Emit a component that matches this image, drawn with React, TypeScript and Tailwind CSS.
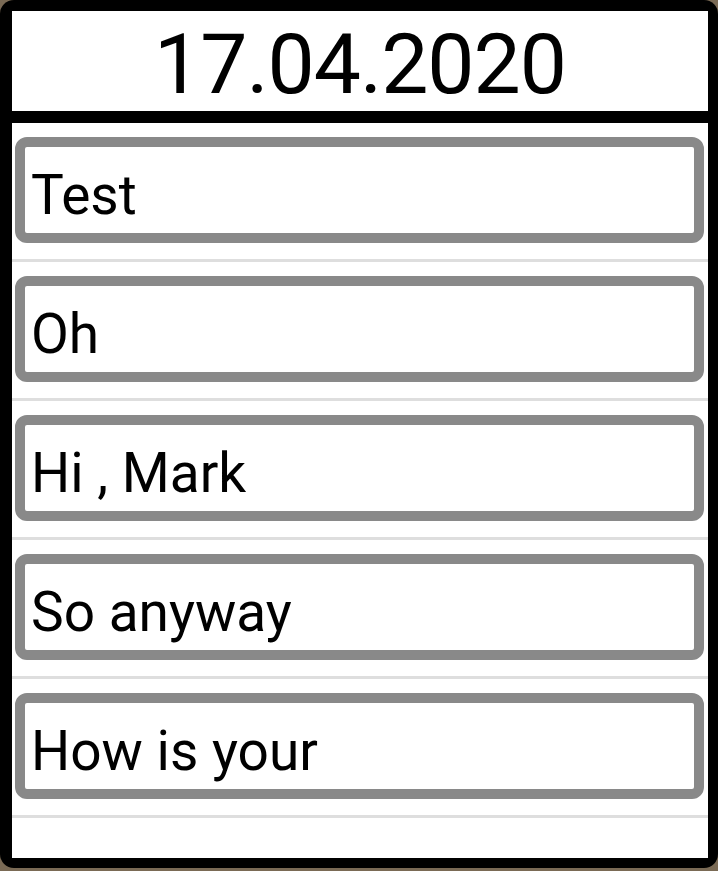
import React from "react";

const items = ["Test", "Oh", "Hi , Mark", "So anyway", "How is your"];

export default function App() {
  return (
    <div
      className="w-[718px] h-[871px] bg-[#7a6a55] overflow-hidden"
      style={{ fontFamily: "Roboto, 'Noto Sans', sans-serif" }}
    >
      <div className="w-[718px] h-[868px] bg-black rounded-[14px] pl-[12px] pr-[10px] pt-[11px] pb-[10px] flex flex-col">
        <div className="h-[100px] bg-white flex items-center justify-center pt-[7px] shrink-0">
          <span className="text-[84px] leading-none tracking-[-1px] text-black">17.04.2020</span>
        </div>
        <div className="h-[12px] shrink-0" />
        <div className="flex-1 bg-white flex flex-col">
          {items.map((t) => (
            <div key={t} className="flex flex-col">
              <div className="pt-[14px] pl-[3px] pr-[4px] pb-[16px]">
                <div className="h-[106px] border-[10px] border-[#898989] rounded-[12px] flex items-center pl-[6px] pt-[10px] bg-white">
                  <span className="text-[55px] leading-none text-black">{t}</span>
                </div>
              </div>
              <div className="h-[3px] bg-[#dedede]" />
            </div>
          ))}
        </div>
      </div>
    </div>
  );
}
